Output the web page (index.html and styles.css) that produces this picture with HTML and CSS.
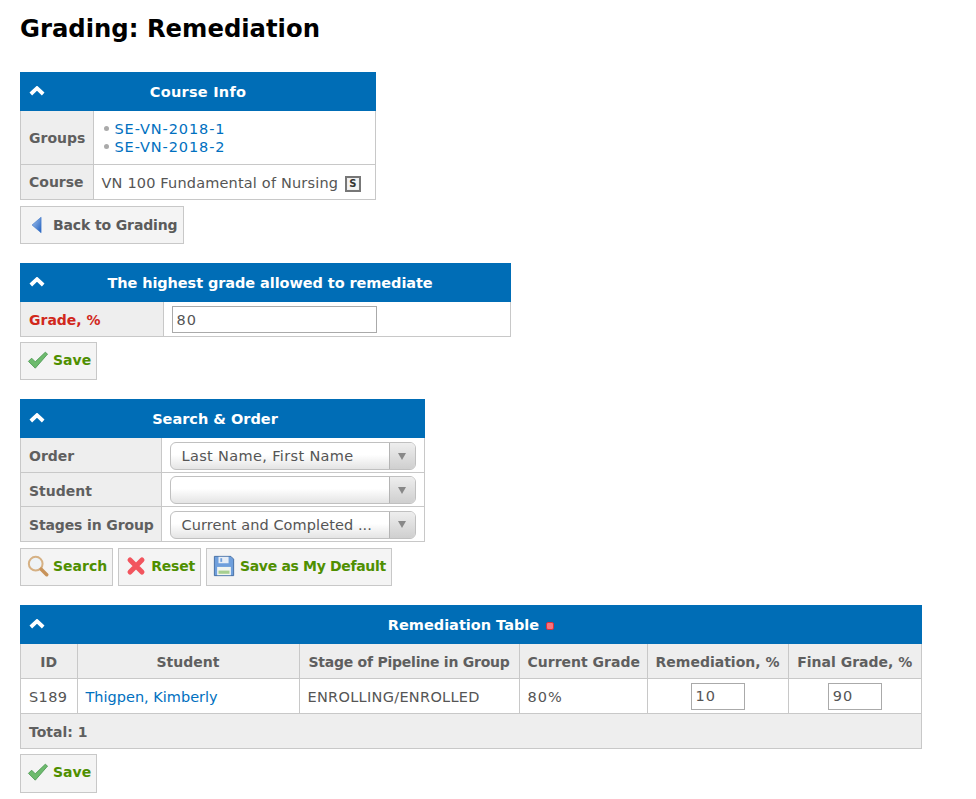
FILE: index.html
```html
<!DOCTYPE html>
<html lang="en">
<head>
<meta charset="utf-8">
<title>Grading: Remediation</title>
<link rel="stylesheet" href="styles.css">
</head>
<body>
<h1>Grading: Remediation</h1>

<section class="panel p-info">
  <header class="bar"><svg class="chev" viewBox="0 0 16 10"><path d="M1.800 8 8 2.200 14.200 8" /></svg><span class="t-info">Course Info</span></header>
  <table class="grid">
    <colgroup><col class="c-info"><col></colgroup>
    <tr class="r-groups"><th>Groups</th><td><ul class="groups"><li><a href="#">SE-VN-2018-1</a></li><li><a href="#">SE-VN-2018-2</a></li></ul></td></tr>
    <tr class="r-course"><th>Course</th><td class="pt"><span class="t-course">VN 100 Fundamental of Nursing</span> <span class="sbadge">S</span></td></tr>
  </table>
</section>
<div class="actions a-first">
  <a class="btn dark" href="#"><svg class="ico back" viewBox="0 0 16 22"><defs><linearGradient id="bk" x1="0" x2="1" y1="0" y2="1"><stop offset="0" stop-color="#a9c8ee"/><stop offset="1" stop-color="#1f5fc0"/></linearGradient></defs><path d="M13 1.500V20.500L2 11Z" fill="url(#bk)" stroke="#3f78c9" stroke-width=".8"/></svg>Back to Grading</a>
</div>

<section class="panel p-grade">
  <header class="bar bar-r"><svg class="chev" viewBox="0 0 16 10"><path d="M1.800 8 8 2.200 14.200 8" /></svg>The highest grade allowed to remediate</header>
  <table class="grid">
    <colgroup><col class="c-grade"><col></colgroup>
    <tr class="r-grade"><th class="req">Grade, %</th><td><input class="inp wide" type="text" value="80"></td></tr>
  </table>
</section>
<div class="actions a-tight">
  <a class="btn" href="#"><svg class="ico check" viewBox="0 0 24 22"><path d="M1.500 12.500 5 9l4 4L20 2.500l2.500 2L9 20Z" fill="#6dbb6d" stroke="#4f9a55" stroke-width="1"/></svg>Save</a>
</div>

<section class="panel p-search">
  <header class="bar bar-l"><svg class="chev" viewBox="0 0 16 10"><path d="M1.800 8 8 2.200 14.200 8" /></svg>Search &amp; Order</header>
  <table class="grid g-search">
    <colgroup><col class="c-search"><col></colgroup>
    <tr class="r-o"><th>Order</th><td><div class="combo"><span class="combo-t t-order">Last Name, First Name</span><span class="combo-b"><i></i></span></div></td></tr>
    <tr class="r-b"><th class="t-student">Student</th><td><div class="combo"><span class="combo-t"></span><span class="combo-b"><i></i></span></div></td></tr>
    <tr class="r-a"><th class="t-stages">Stages in Group</th><td><div class="combo"><span class="combo-t t-cur">Current and Completed ...</span><span class="combo-b"><i></i></span></div></td></tr>
  </table>
</section>
<div class="actions a-first">
  <a class="btn" href="#"><svg class="ico" viewBox="0 0 24 24"><circle cx="9.500" cy="9.500" r="7.500" fill="#eef3f6" stroke="#d6b184" stroke-width="2.200"/><path d="m15.500 15.500 6 6" stroke="#c8935a" stroke-width="3.800" stroke-linecap="round"/></svg>Search</a>
  <a class="btn reset" href="#"><svg class="ico" viewBox="0 0 24 24"><path d="M5.500 5.500 18.500 18.500M18.500 5.500 5.500 18.500" stroke="#f2555e" stroke-width="5.500" stroke-linecap="round"/></svg>Reset</a>
  <a class="btn save-def" href="#"><svg class="ico" viewBox="0 0 24 24"><path d="M1.500 1.500h18l3 3v18h-21Z" fill="#6f9fdc" stroke="#41699f"/><path d="M6 2h11v7H6Z" fill="#e6edf6"/><path d="M8 3.500h2v4H8Z" fill="#6f9fdc"/><path d="M4.500 13h15v9h-15Z" fill="#f2f5f0"/><path d="M6 17h12v3.500H6Z" fill="#a6cf90"/></svg><span class="t-def">Save as My Default</span></a>
</div>

<section class="panel p-table">
  <header class="bar"><svg class="chev" viewBox="0 0 16 10"><path d="M1.800 8 8 2.200 14.200 8" /></svg>Remediation Table <span class="dot"></span></header>
  <table class="grid data">
    <colgroup><col class="w1"><col class="w2"><col class="w3"><col class="w4"><col class="w5"><col></colgroup>
    <tr class="r-th"><th class="ctr">ID</th><th class="ctr">Student</th><th class="ctr t-stage">Stage of Pipeline in Group</th><th class="ctr">Current Grade</th><th class="ctr">Remediation, %</th><th class="ctr">Final Grade, %</th></tr>
    <tr class="r-td"><td class="t-id pt">S189</td><td class="pt"><a href="#">Thigpen, Kimberly</a></td><td class="t-stagev pt">ENROLLING/ENROLLED</td><td class="t-pct pt">80%</td><td class="ctr"><input class="inp small" type="text" value="10"></td><td class="ctr"><input class="inp small" type="text" value="90"></td></tr>
    <tr class="r-total"><th colspan="6" class="pt">Total: 1</th></tr>
  </table>
</section>
<div class="actions a-last">
  <a class="btn" href="#"><svg class="ico check" viewBox="0 0 24 22"><path d="M1.500 12.500 5 9l4 4L20 2.500l2.500 2L9 20Z" fill="#6dbb6d" stroke="#4f9a55" stroke-width="1"/></svg>Save</a>
</div>
</body>
</html>
```
FILE: styles.css
```css
* { box-sizing: border-box; }
html, body { margin: 0; background: #fff; }
body { padding: 0 20px; font: 14px/18px "DejaVu Sans", Verdana, sans-serif; color: #555; height: 799px; overflow: hidden; }
h1 { margin: 0 0 26px; padding-top: 12px; font-size: 24.300px; line-height: 34px; color: #000; font-weight: 700; }
a { color: #0070c0; text-decoration: none; }

.panel { display: block; }
.p-info { width: 356px; }
.p-grade { width: 491px; }
.p-search { width: 405px; }
.p-table { width: 902px; }

.bar { position: relative; height: 39px; background: #006db6; color: #fff; font-weight: 700; font-size: 14.500px; line-height: 40px; text-align: center; }
.bar-r { padding-left: 9px; letter-spacing: -.08px; }
.bar-l { padding-right: 15px; }
.chev { position: absolute; left: 9px; top: 14px; width: 16px; height: 10px; fill: none; stroke: #fff; stroke-width: 3.800; }
.dot { display: inline-block; width: 8px; height: 8px; margin-left: 2px; border-radius: 2px; background: #f8737c; border: 1px solid #d8303c; vertical-align: 0; }
.t-info { letter-spacing: .25px; }

.grid { width: 100%; table-layout: fixed; border-collapse: collapse; }
.grid th, .grid td { border: 1px solid #c8c8c8; padding: 0 8px; font-size: 14.500px; line-height: 18px; }
.grid th { background: #eee; text-align: left; font-size: 14px; font-weight: 700; color: #5f5f5f; white-space: nowrap; }
.grid td { background: #fff; white-space: nowrap; }
.grid tr:first-child th, .grid tr:first-child td { border-top: 0; padding-top: 2px; }
.grid .ctr { text-align: center; }
.grid .pt { padding-top: 2px; }
.grid .req { color: #d1281c; padding-top: 4px; }
.grid .t-stage { letter-spacing: -.24px; }
.grid .t-stages { letter-spacing: -.13px; }
.g-search th, .g-search td { padding-top: 2px; }
.grid.g-search tr:first-child th, .grid.g-search tr:first-child td { padding-top: 3px; }
.grid.g-search .t-student { padding-top: 4px; }
.t-course { letter-spacing: .17px; }
.t-stagev { letter-spacing: .3px; }
.t-id { letter-spacing: .4px; }
.t-pct { letter-spacing: 1px; }
.t-order { letter-spacing: .35px; }
.t-cur { letter-spacing: .08px; }

.c-info { width: 72.500px; }
.c-grade { width: 142.500px; }
.c-search { width: 140.500px; }
.w1 { width: 56.500px; }
.w2 { width: 222px; }
.w3 { width: 220px; }
.w4 { width: 128px; }
.w5 { width: 141px; }

.r-groups { height: 53px; }
.r-course { height: 35px; }
.r-grade { height: 35px; }
.r-o { height: 34px; }
.r-a { height: 35px; }
.r-b { height: 34px; }
.r-th, .r-td, .r-total { height: 35px; }

.groups { list-style: none; margin: 0; padding: 0 0 0 2px; letter-spacing: .9px; }
.groups li { position: relative; padding-left: 11px; }
.groups li::before { content: ""; position: absolute; left: 0; top: 6px; width: 5px; height: 5px; border-radius: 50%; background: #aaa; }
.sbadge { display: inline-block; overflow: hidden; width: 16px; height: 16px; margin-left: 2px; border: 2px solid #777; box-shadow: inset 0 0 0 1px #eee; background: #f4f4f4; color: #333; font-size: 10px; font-weight: 700; line-height: 12px; text-align: center; vertical-align: -4px; }

.inp { height: 27px; border: 1px solid #aaa; padding: 0 4px; font: 14.500px "DejaVu Sans", Verdana, sans-serif; letter-spacing: 1px; color: #555; background: #fff; border-radius: 0; outline: 0; vertical-align: middle; }
.wide { width: 205px; }
.small { width: 54px; }

.combo { display: flex; width: 246px; height: 28px; border: 1px solid #c0c0c0; border-radius: 6px; overflow: hidden; background: linear-gradient(#fff 45%, #e4e4e4); margin: 0 -1px 0 0; }
.combo-t { flex: 1; padding-left: 11px; font-size: 14.500px; line-height: 26px; color: #555; white-space: nowrap; overflow: hidden; }
.combo-b { display: flex; width: 26px; align-items: center; justify-content: center; border-left: 1px solid #b4b4b4; background: linear-gradient(#eee, #cfcfcf); }
.combo-b i { display: block; width: 0; height: 0; border: 4px solid transparent; border-top: 7px solid #888; border-bottom: 0; }

.actions { display: flex; gap: 5px; }
.a-first { margin-top: 6px; margin-bottom: 19px; }
.a-tight { margin-top: 5px; margin-bottom: 19px; }
.a-last { margin-top: 5px; }
.btn { display: inline-flex; align-items: center; height: 38px; padding: 0 5px 2px 6px; background: #f4f4f4; border: 1px solid #c8c8c8; color: #4f8f00; font-size: 14px; font-weight: 700; white-space: nowrap; }
.btn.dark { color: #5b5b5b; padding: 0 5px 0 9px; letter-spacing: -.13px; }
.ico { width: 22px; height: 22px; margin-right: 4px; flex: none; }
.check { width: 22px; height: 20px; margin-right: 4px; }
.back { width: 14px; height: 18px; margin-right: 9px; }
.reset { letter-spacing: -.2px; }
.save-def .ico { margin-right: 5px; }
.t-def { letter-spacing: -.33px; }
.a-last .btn { height: 39px; padding-bottom: 4px; }
```
